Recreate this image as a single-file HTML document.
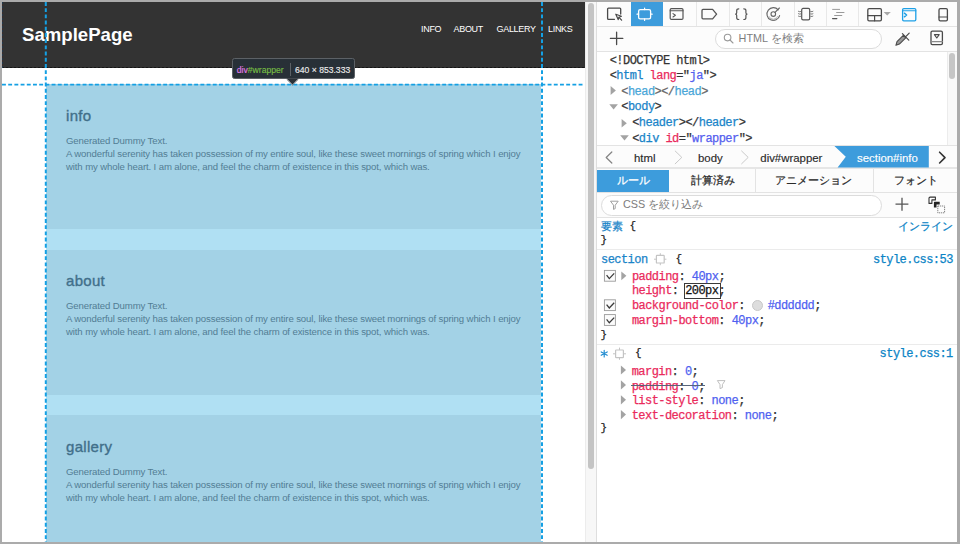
<!DOCTYPE html>
<html><head><meta charset="utf-8">
<style>
*{margin:0;padding:0;box-sizing:border-box}
html,body{width:960px;height:544px;overflow:hidden;background:#aaaaaa;font-family:"Liberation Sans",sans-serif}
.a{position:absolute;white-space:nowrap}
#frame{position:absolute;left:0;top:0;width:960px;height:544px;background:#ababab}
#page{position:absolute;left:2px;top:2px;width:583px;height:540px;background:#fff}
#hdr{position:absolute;left:2px;top:2px;width:583px;height:66px;background:#333}
.logo{font-size:18.6px;font-weight:bold;color:#fff;letter-spacing:0;line-height:18.4px}
.nav{top:24.6px;font-size:9px;color:#fff;line-height:9px;letter-spacing:-0.3px}
#wrap{position:absolute;left:46px;top:84px;width:495px;height:458px;background:#a3d2e6}
.stripe{left:46px;width:495px;height:20.6px;background:#b0e0f3}
.sec{left:66px;width:470px;color:#557d92}
.sec h2{position:absolute;left:0;top:107.5px;font-size:15px;font-weight:normal;line-height:15px;color:#416f8a;letter-spacing:0.3px;-webkit-text-stroke:0.35px currentColor}
.sec p{position:absolute;left:0;top:133.75px;font-size:9.6px;letter-spacing:-0.12px;line-height:13.05px;color:#527d94}
.vg{top:2px;width:0;height:540px;border-left:1px dashed #1a9ad6}
.hg{left:2px;top:84px;width:580px;height:0;border-top:1px dashed #1a9ad6}
#gutter{position:absolute;left:585px;top:2px;width:11px;height:540px;background:#f7f7f7;border-left:1px solid #ececec}
#thumb{position:absolute;left:588px;top:3px;width:6px;height:466px;border-radius:3px;background:#c4c4c4}

#dev{position:absolute;left:596px;top:2px;width:361px;height:540px;background:#fff}
.sep{top:2px;width:1px;height:24px;background:#e8e8e8}
.tip{top:65.6px;font-size:8.6px;line-height:8.6px;-webkit-text-stroke:0.15px currentColor}
.sans{font-family:"Liberation Sans",sans-serif}
.mono{font-family:"Liberation Mono",monospace;-webkit-text-stroke:0.25px currentColor}
.mk{font-size:12px;line-height:15px;color:#333;letter-spacing:-0.55px}
.br{color:#333}.tg{color:#1a84c8}.at{color:#ea2a5c}.av{color:#5560ee}
.br2{color:#666}.tg2{color:#49a6d8}
.bc{top:152px;font-size:11.4px;line-height:12px;color:#2a2a2a;-webkit-text-stroke:0.15px currentColor}
.st{top:175px;font-size:11px;line-height:11px;color:#2a2a2a;-webkit-text-stroke:0.25px currentColor}
.rl{font-size:12px;line-height:14.8px;color:#333;letter-spacing:-0.55px}
.b11{font-size:11px !important;letter-spacing:0 !important;color:#222}
.sel{color:#1a84c8}.pn{color:#333}.pr{color:#ea2a5c}.vl{color:#4f5ff0}
.ed{color:#111}
.sw{display:inline-block;width:11px;height:11px;border-radius:50%;background:#ddd;border:1px solid #c8c8c8;vertical-align:-2px;margin-right:5px}
</style></head><body>
<div id="frame"></div>
<div id="page"></div>
<div id="hdr"></div>
<div class="a" style="left:2px;top:67px;width:583px;height:1px;background:repeating-linear-gradient(90deg,#151515 0 2px,#2a2a2a 2px 4px)"></div>
<div class="a" style="left:2px;top:2px;width:1px;height:66px;background:repeating-linear-gradient(180deg,#23384a 0 2px,#3a2e2e 2px 4px)"></div>
<div class="a logo" style="left:22px;top:25.5px">SamplePage</div>
<div class="a nav" style="left:421px">INFO</div>
<div class="a nav" style="left:453.5px">ABOUT</div>
<div class="a nav" style="left:496.5px">GALLERY</div>
<div class="a nav" style="left:548px">LINKS</div>
<div id="wrap"></div>
<div class="a stripe" style="top:229.3px"></div>
<div class="a stripe" style="top:394.6px"></div>
<div class="a sec" style="top:0px"><h2>info</h2><p>Generated Dummy Text.<br>A wonderful serenity has taken possession of my entire soul, like these sweet mornings of spring which I enjoy<br>with my whole heart. I am alone, and feel the charm of existence in this spot, which was.</p></div>
<div class="a sec" style="top:165.5px"><h2>about</h2><p>Generated Dummy Text.<br>A wonderful serenity has taken possession of my entire soul, like these sweet mornings of spring which I enjoy<br>with my whole heart. I am alone, and feel the charm of existence in this spot, which was.</p></div>
<div class="a sec" style="top:331px"><h2>gallery</h2><p>Generated Dummy Text.<br>A wonderful serenity has taken possession of my entire soul, like these sweet mornings of spring which I enjoy<br>with my whole heart. I am alone, and feel the charm of existence in this spot, which was.</p></div>
<svg class="a" style="left:0;top:0" width="590" height="544" viewBox="0 0 590 544"><g stroke="#14a0e4" stroke-dasharray="3.9 2.3" fill="none"><path d="M45.8 2 V542" stroke-width="2"/><path d="M542 2 V542" stroke-width="2"/><path d="M2 84.6 H583" stroke-width="1.6"/></g></svg>
<div class="a" style="left:232.3px;top:58.3px;width:123px;height:20.8px;background:#283037;border:1px solid #5c6166;border-radius:2.5px"></div>
<svg class="a" style="left:284px;top:78px" width="18" height="8" viewBox="284 78 18 8"><path d="M286.6 78.6 L292.5 84.4 L298.4 78.6 Z" fill="#2b3137"/><path d="M286.6 79.2 L292.5 85 L298.4 79.2" fill="none" stroke="#5c6166" stroke-width="0.8"/></svg>
<div class="a" style="left:289.5px;top:63px;width:1px;height:12.5px;background:#5c6166"></div>
<div class="a sans tip" style="left:236.8px"><span style="color:#e17ee9">div</span><span style="color:#76bd45">#wrapper</span></div>
<div class="a sans tip" style="left:295px;color:#eaeaea">640 × 853.333</div>
<div id="gutter"></div>
<div id="thumb"></div>
<div id="dev"></div>
<!-- toolbar row 1 -->
<div class="a" style="left:597px;top:2px;width:360px;height:24px;background:#fcfcfc"></div>
<div class="a" style="left:597px;top:26px;width:360px;height:1px;background:#e3e3e3"></div>
<div class="a" style="left:631px;top:2px;width:32px;height:24px;background:#3d9cdc"></div>
<div class="a sep" style="left:696px"></div>
<div class="a sep" style="left:729px"></div>
<div class="a sep" style="left:761px"></div>
<div class="a sep" style="left:794px"></div>
<div class="a sep" style="left:826px"></div>
<div class="a sep" style="left:858px"></div>
<svg class="a" style="left:597px;top:2px" width="360" height="24" viewBox="597 2 360 24" fill="none" stroke-linecap="round" stroke-linejoin="round">
  <!-- picker -->
  <path d="M614.5 19.3 H608.5 Q607.6 19.3 607.6 18.4 V9.1 Q607.6 8.2 608.5 8.2 H619.8 Q620.7 8.2 620.7 9.1 V14" stroke="#4a4a4a" stroke-width="1.3"/>
  <path d="M615.8 14.2 L621.4 16.2 L619 17.3 L618.2 19.6 Z" stroke="#4a4a4a" stroke-width="1.2"/>
  <path d="M619 17.3 L621.6 20.2" stroke="#4a4a4a" stroke-width="1.2"/>
  <!-- inspector (active) -->
  <rect x="638.6" y="9.6" width="12" height="9.2" rx="1.6" stroke="#fff" stroke-width="1.3"/>
  <path d="M644.6 8 V9.6 M644.6 18.8 V20.4 M637 14.2 H638.6 M650.6 14.2 H652.2" stroke="#fff" stroke-width="1.2"/>
  <!-- console -->
  <rect x="670.2" y="8.6" width="12.8" height="10.8" rx="1.2" stroke="#555" stroke-width="1.2"/>
  <path d="M670.2 10.8 H683" stroke="#555" stroke-width="1.1"/>
  <path d="M673 13.6 L675.4 15.3 L673 17" stroke="#555" stroke-width="1.1"/>
  <!-- debugger tag -->
  <path d="M703 9.4 H712.6 L716.6 14.1 L712.6 18.8 H703 Q702 18.8 702 17.8 V10.4 Q702 9.4 703 9.4 Z" stroke="#555" stroke-width="1.3"/>
  <!-- style editor braces -->
  <path d="M738.8 8.8 Q736.7 8.8 736.7 10.6 V12.8 Q736.7 14 735.6 14.1 Q736.7 14.3 736.7 15.5 V17.7 Q736.7 19.5 738.8 19.5" stroke="#555" stroke-width="1.2"/>
  <path d="M743.8 8.8 Q745.9 8.8 745.9 10.6 V12.8 Q745.9 14 747 14.1 Q745.9 14.3 745.9 15.5 V17.7 Q745.9 19.5 743.8 19.5" stroke="#555" stroke-width="1.2"/>
  <!-- performance -->
  <path d="M778.2 9.8 A6.4 6.4 0 1 0 779.6 15.6" stroke="#666" stroke-width="1.1"/>
  <path d="M777.6 16.4 A4.4 4.4 0 0 1 769 16.4 M776.4 18.2 A5.2 5.2 0 0 1 770.2 18.2" stroke="#aaa" stroke-width="0.7"/>
  <circle cx="773.3" cy="14.1" r="2.3" stroke="#666" stroke-width="1.1"/>
  <path d="M775 12.4 L779.4 8" stroke="#666" stroke-width="1.1"/>
  <!-- memory / vibrate -->
  <rect x="801.7" y="8.4" width="8" height="11.4" rx="1.4" stroke="#555" stroke-width="1.2"/>
  <path d="M800.6 11.6 Q799 12 798.4 11.4 M800.6 14 Q799 14.4 798.4 13.8 M800.6 16.4 Q799 16.8 798.4 16.2 M810.8 11.6 Q812.4 12 813 11.4 M810.8 14 Q812.4 14.4 813 13.8 M810.8 16.4 Q812.4 16.8 813 16.2" stroke="#6a6a6a" stroke-width="0.9"/>
  <!-- network waterfall -->
  <path d="M832.6 9.4 H839.6 M836.6 12.5 H844 M834.6 15.5 H841.8" stroke="#9a9a9a" stroke-width="1"/>
  <path d="M832.6 18.6 H836.8" stroke="#555" stroke-width="1.3"/>
  <!-- layout -->
  <rect x="867.8" y="8.6" width="13.6" height="12.2" rx="1.3" stroke="#4a4a4a" stroke-width="1.3"/>
  <path d="M867.8 15.6 H881.4 M874.6 15.6 V20.8" stroke="#4a4a4a" stroke-width="1.2"/>
  <path d="M883.6 12 H890.8 L887.2 15.4 Z" fill="#a8a8a8" stroke="none"/>
  <!-- split console (blue) -->
  <rect x="902.6" y="8.6" width="13.2" height="12.2" rx="1.2" stroke="#1ea0e6" stroke-width="1.3"/>
  <path d="M902.6 10.8 H915.8" stroke="#1ea0e6" stroke-width="1.1"/>
  <path d="M904.4 13.2 L906.6 15 L904.4 16.8" stroke="#1ea0e6" stroke-width="1.5"/>
  <!-- responsive -->
  <rect x="939" y="8.6" width="8.4" height="12.2" rx="1.3" stroke="#4a4a4a" stroke-width="1.3"/>
  <path d="M939 17 H947.4" stroke="#4a4a4a" stroke-width="1.1"/>
</svg>
<!-- toolbar row 2 -->
<div class="a" style="left:597px;top:27px;width:360px;height:24px;background:#fcfcfc"></div>
<div class="a" style="left:597px;top:51px;width:360px;height:1px;background:#e3e3e3"></div>
<div class="a" style="left:714.5px;top:28.5px;width:167px;height:20.5px;border:1px solid #dcdcdc;border-radius:10px;background:#fff"></div>
<div class="a sans" style="left:738.6px;top:33px;font-size:10.8px;line-height:11px;color:#7c7c7c">HTML を検索</div>
<svg class="a" style="left:597px;top:27px" width="360" height="24" viewBox="597 27 360 24" fill="none" stroke-linecap="round" stroke-linejoin="round">
  <path d="M616.6 32.2 V44.6 M610.4 38.4 H622.8" stroke="#4a4a4a" stroke-width="1.3"/>
  <circle cx="727.6" cy="37.6" r="3.3" stroke="#9a9a9a" stroke-width="1.1"/>
  <path d="M730 40 L733 43" stroke="#9a9a9a" stroke-width="1.1"/>
  <path d="M895.9 45.3 L897 41.7 L903.3 35.4 L905.7 37.8 L899.4 44.1 Z" stroke="#4a4a4a" stroke-width="1.1" fill="#9a9a9a"/>
  <path d="M902.4 33.7 L908.8 40.1 M906 36.3 L909.2 33.1" stroke="#4a4a4a" stroke-width="1.2"/>
  <rect x="931" y="31.2" width="11.4" height="13.4" rx="1.4" stroke="#4a4a4a" stroke-width="1.3"/>
  <path d="M931 41.6 H942.4" stroke="#8a8a8a" stroke-width="1.2"/>
  <path d="M934.4 34.6 H939.2 L936.8 38 Z" stroke="#4a4a4a" stroke-width="1.1"/>
</svg>
<!-- markup -->
<div class="a" style="left:597px;top:52px;width:360px;height:93px;background:#fff"></div>
<div class="a" style="left:946.5px;top:52px;width:10.5px;height:93px;background:#f9f9f9;border-left:1px solid #ececec"></div>
<div class="a" style="left:948.5px;top:52.7px;width:6.6px;height:26.3px;border-radius:3.3px;background:#c6c6c6"></div>
<div class="a mono mk" style="left:609.7px;top:53.5px"><span class="br">&lt;!DOCTYPE html&gt;</span></div>
<div class="a mono mk" style="left:609.7px;top:68.9px"><span class="br">&lt;</span><span class="tg">html</span> <span class="at">lang</span><span class="br">="</span><span class="av">ja</span><span class="br">"&gt;</span></div>
<div class="a mono mk" style="left:621.3px;top:84.6px"><span class="br2">&lt;</span><span class="tg2">head</span><span class="br2">&gt;&lt;/</span><span class="tg2">head</span><span class="br2">&gt;</span></div>
<div class="a mono mk" style="left:621.3px;top:100.2px"><span class="br">&lt;</span><span class="tg">body</span><span class="br">&gt;</span></div>
<div class="a mono mk" style="left:632.2px;top:115.8px"><span class="br">&lt;</span><span class="tg">header</span><span class="br">&gt;&lt;/</span><span class="tg">header</span><span class="br">&gt;</span></div>
<div class="a mono mk" style="left:632.2px;top:132px"><span class="br">&lt;</span><span class="tg">div</span> <span class="at">id</span><span class="br">="</span><span class="av">wrapper</span><span class="br">"&gt;</span></div>
<svg class="a" style="left:597px;top:52px" width="40" height="93" viewBox="597 52 40 93">
  <path d="M610.6 85.9 L615.9 90.5 L610.6 95.1 Z" fill="#a3a3a3"/>
  <path d="M609.3 104.3 L617.9 104.3 L613.6 109.6 Z" fill="#a3a3a3"/>
  <path d="M621.6 118.9 L626.8 123.2 L621.6 127.5 Z" fill="#a3a3a3"/>
  <path d="M620.2 135.2 L628.8 135.2 L624.5 140.6 Z" fill="#a3a3a3"/>
</svg>
<div class="a" style="left:597px;top:145px;width:360px;height:1px;background:#e3e3e3"></div>
<!-- breadcrumbs -->
<div class="a" style="left:597px;top:146px;width:360px;height:21.5px;background:#fcfcfc"></div>
<div class="a" style="left:597px;top:167px;width:360px;height:2px;background:#e6e6e6"></div>
<svg class="a" style="left:597px;top:146px" width="360" height="22" viewBox="597 146 360 22" fill="none" stroke-linecap="round" stroke-linejoin="round">
  <path d="M611.8 152 L606.2 157.5 L611.8 163" stroke="#858585" stroke-width="1.25"/>
  <path d="M675.2 151 L681.8 157.4 L675.2 163.8" stroke="#c4c4c4" stroke-width="0.9"/>
  <path d="M741.6 151 L748.2 157.4 L741.6 163.8" stroke="#c4c4c4" stroke-width="0.9"/>
  <path d="M834.4 146 H928.8 V167.4 H837.6 L845.8 156.7 Z" fill="#3d9cdc" stroke="none"/>
  <path d="M939.6 152.2 L945 157.6 L939.6 163" stroke="#333" stroke-width="1.6"/>
</svg>
<div class="a sans bc" style="left:634px">html</div>
<div class="a sans bc" style="left:698px">body</div>
<div class="a sans bc" style="left:760.3px">div#wrapper</div>
<div class="a sans bc" style="left:857px;color:#fff">section#info</div>
<!-- sidebar tabs -->
<div class="a" style="left:597px;top:169px;width:360px;height:22.5px;background:#fcfcfc"></div>
<div class="a" style="left:597px;top:169.5px;width:72.3px;height:22.3px;background:#3d9cdc"></div>
<div class="a" style="left:754.6px;top:169px;width:1px;height:22.5px;background:#e3e3e3"></div>
<div class="a" style="left:873px;top:169px;width:1px;height:22.5px;background:#e3e3e3"></div>
<div class="a" style="left:597px;top:191.5px;width:360px;height:1px;background:#e3e3e3"></div>
<div class="a sans st" style="left:617px;color:#fff">ルール</div>
<div class="a sans st" style="left:691px">計算済み</div>
<div class="a sans st" style="left:775px">アニメーション</div>
<div class="a sans st" style="left:894.4px">フォント</div>
<!-- filter row -->
<div class="a" style="left:597px;top:192.5px;width:360px;height:24px;background:#fcfcfc"></div>
<div class="a" style="left:597px;top:216.5px;width:360px;height:1px;background:#e3e3e3"></div>
<div class="a" style="left:600.5px;top:194.5px;width:281px;height:21px;border:1px solid #dcdcdc;border-radius:10.5px;background:#fff"></div>
<div class="a sans" style="left:623px;top:199px;font-size:10.8px;line-height:11px;color:#7c7c7c">CSS を絞り込み</div>
<svg class="a" style="left:597px;top:192px" width="360" height="25" viewBox="597 192 360 25" fill="none" stroke-linejoin="round">
  <path d="M610.5 201.2 H618.2 L615.2 205.2 V208.6 L613.5 209.4 V205.2 Z" stroke="#a0a0a0" stroke-width="1"/>
  <path d="M902 197.8 V210.7 M895.5 204.2 H908.4" stroke="#555" stroke-width="1.3"/>
  <path d="M929 203.4 V198.2 Q929 197.1 930.1 197.1 H935.4 V199.9 H931.9 V203.4 Z" stroke="#333" stroke-width="1.1" fill="#fff"/>
  <path d="M933.9 207.6 V202.6 Q933.9 201.8 934.7 201.8 H939.7 V204.4 H936.5 V207.6 Z" fill="#222" stroke="none"/>
  <rect x="937.8" y="206" width="6.8" height="6.8" stroke="#555" stroke-width="0.9" stroke-dasharray="1 1"/>
</svg>
<!-- rules -->
<div class="a" style="left:597px;top:217.5px;width:360px;height:324.5px;background:#fff"></div>
<div class="a mono rl" style="left:601px;top:219.7px"><span class="sel" style="font-size:11px;letter-spacing:0">要素</span></div>
<div class="a mono rl b11" style="left:629.6px;top:219.2px">{</div>
<div class="a mono rl" style="left:898px;top:219.7px;color:#0b84c6;font-size:11px;letter-spacing:0">インライン</div>
<div class="a mono rl b11" style="left:600.4px;top:232.7px">}</div>
<div class="a" style="left:597px;top:249px;width:360px;height:1px;background:#ebebeb"></div>
<div class="a mono rl" style="left:601px;top:252.8px"><span class="sel">section</span></div>
<div class="a mono rl b11" style="left:675.5px;top:251.7px">{</div>
<div class="a mono rl" style="left:873px;top:252.8px;color:#0b84c6">style.css:53</div>
<div class="a mono rl" style="left:631.9px;top:269.9px"><span class="pr">padding</span><span class="pn">: </span><span class="vl">40px</span><span class="pn">;</span></div>
<div class="a" style="left:684px;top:283.3px;width:36.6px;height:15.5px;border:1px solid #3a3a3a;background:#fff"></div>
<div class="a mono rl" style="left:631.9px;top:284.3px"><span class="pr">height</span><span class="pn">: </span><span class="ed">200px</span><span class="pn">;</span></div>
<div class="a mono rl" style="left:631.9px;top:298.7px"><span class="pr">background-color</span><span class="pn">: </span><span class="sw"></span><span class="vl">#dddddd</span><span class="pn">;</span></div>
<div class="a mono rl" style="left:631.9px;top:313.6px"><span class="pr">margin-bottom</span><span class="pn">: </span><span class="vl">40px</span><span class="pn">;</span></div>
<div class="a mono rl b11" style="left:600.4px;top:327.7px">}</div>
<div class="a" style="left:597px;top:344px;width:360px;height:1px;background:#ebebeb"></div>
<div class="a mono rl b11" style="left:635.1px;top:346.3px">{</div>
<div class="a mono rl" style="left:879.6px;top:347.4px;color:#0b84c6">style.css:1</div>
<div class="a mono rl" style="left:631.7px;top:364.5px"><span class="pr">margin</span><span class="pn">: </span><span class="vl">0</span><span class="pn">;</span></div>
<div class="a" style="left:631.2px;top:385px;width:74px;height:1px;background:#56657a;z-index:2"></div>
<div class="a mono rl" style="left:631.7px;top:379.5px"><span class="pr">padding</span><span class="pn">: </span><span class="vl">0</span><span class="pn">;</span></div>
<div class="a mono rl" style="left:631.7px;top:394.4px"><span class="pr">list-style</span><span class="pn">: </span><span class="vl">none</span><span class="pn">;</span></div>
<div class="a mono rl" style="left:631.7px;top:409.2px"><span class="pr">text-decoration</span><span class="pn">: </span><span class="vl">none</span><span class="pn">;</span></div>
<div class="a mono rl b11" style="left:600.4px;top:421.2px">}</div>
<svg class="a" style="left:597px;top:250px" width="200" height="180" viewBox="597 250 200 180" fill="none">
  <!-- selector highlighter icons -->
  <rect x="656.4" y="255.4" width="7.8" height="7.6" rx="0.6" stroke="#c4c4c4" stroke-width="1.2"/>
  <path d="M660.3 253.2 V255.4 M660.3 263 V265.2 M654 259.2 H656.4 M664.2 259.2 H666.4" stroke="#c4c4c4" stroke-width="1"/>
  <rect x="615.6" y="350" width="7.8" height="7.6" rx="0.6" stroke="#c4c4c4" stroke-width="1.2"/>
  <path d="M619.5 347.6 V350 M619.5 357.6 V359.8 M613 353.8 H615.6 M623.4 353.8 H626" stroke="#c4c4c4" stroke-width="1"/>
  <path d="M604.2 350.2 V357 M601.2 351.9 L607.2 355.3 M601.2 355.3 L607.2 351.9" stroke="#1f8bd0" stroke-width="1.15" stroke-linecap="round"/>
  <!-- checkboxes -->
  <rect x="604.4" y="270.4" width="11" height="10.8" stroke="#9a9a9a" stroke-width="0.9" fill="#fbfbfb"/>
  <path d="M606.6 275.2 L609.3 278.6 L614.2 273.4" stroke="#3a3a3a" stroke-width="1.3"/>
  <rect x="604.4" y="299.8" width="11" height="10.8" stroke="#9a9a9a" stroke-width="0.9" fill="#fbfbfb"/>
  <path d="M606.6 304.6 L609.3 308 L614.2 302.8" stroke="#3a3a3a" stroke-width="1.3"/>
  <rect x="604.4" y="314.6" width="11" height="10.8" stroke="#9a9a9a" stroke-width="0.9" fill="#fbfbfb"/>
  <path d="M606.6 319.4 L609.3 322.8 L614.2 317.6" stroke="#3a3a3a" stroke-width="1.3"/>
  <!-- twisties -->
  <path d="M621.3 271.4 L626.4 275.85 L621.3 280.3 Z" fill="#a3a3a3"/>
  <path d="M620.9 365.4 L626 370 L620.9 374.6 Z" fill="#a3a3a3"/>
  <path d="M620.9 380.3 L626 384.9 L620.9 389.5 Z" fill="#a3a3a3"/>
  <path d="M620.9 395.2 L626 399.8 L620.9 404.4 Z" fill="#a3a3a3"/>
  <path d="M620.9 410 L626 414.6 L620.9 419.2 Z" fill="#a3a3a3"/>
  <!-- filter icon next to padding -->
  <path d="M717.4 380.6 H725 L722.4 384.6 V387.6 L720 388.6 V384.6 Z" stroke="#b8b8b8" stroke-width="0.9" stroke-linejoin="round"/>
</svg>
<div class="a" style="left:596px;top:2px;width:1px;height:540px;background:#dedede"></div>
</body></html>
